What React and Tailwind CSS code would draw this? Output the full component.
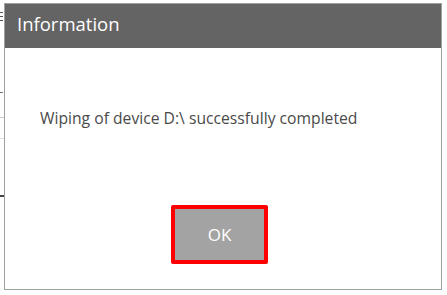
import React from "react";

const App = () => {
    return (
        <div className="w-[447px] h-[295px] bg-white flex" style={{ fontFamily: '"Open Sans", "Noto Sans", sans-serif' }}>
            {/* left strip: window behind the dialog */}
            <div className="w-[4px] flex flex-col">
                <div className="h-[12px]" />
                <div className="h-[1px] w-[3px] bg-[#555]" />
                <div className="h-[3px]" />
                <div className="h-[1px] w-[3px] bg-[#555]" />
                <div className="h-[3px]" />
                <div className="h-[1px] w-[3px] bg-[#555]" />
                <div className="h-[71px]" />
                <div className="h-[1px] w-[3px] bg-[#777]" />
                <div className="h-[24px]" />
                <div className="h-[1px] w-[4px] bg-[#ccc]" />
                <div className="h-[20px]" />
                <div className="h-[1px] w-[4px] bg-[#ddd]" />
                <div className="h-[56px]" />
                <div className="h-[2px] w-[4px] bg-[#444]" />
            </div>
            <div className="w-[438px] h-[287px] mt-[3px] border border-[#a0a0a0] flex flex-col bg-white">
                <div className="h-[44px] bg-[#646464] flex items-center pl-[12px] pb-[3px]">
                    <span className="text-white text-[18.5px] leading-none">Information</span>
                </div>
                <div className="flex-1 flex flex-col">
                    <p className="mt-[60px] pl-[35px] text-[15.7px] leading-[20px] text-[#4a4a4a]">
                        Wiping of device D:\ successfully completed
                    </p>
                    <div className="mt-[77px] flex justify-center pr-[7px]">
                        <button className="w-[97px] h-[59px] border-[4px] border-[#ff0000] rounded-[2px] bg-[#a3a3a3] text-white text-[17px]">
                            OK
                        </button>
                    </div>
                </div>
            </div>
        </div>
    );
};

export default App;
